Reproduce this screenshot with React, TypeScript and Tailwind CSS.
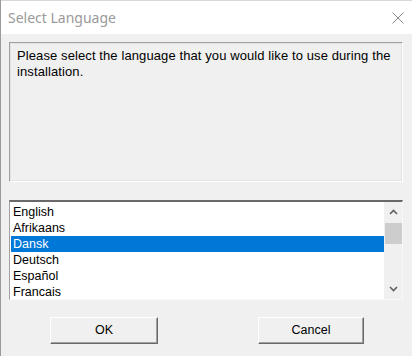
import React, { useState } from 'react';

const LANGS = ['English', 'Afrikaans', 'Dansk', 'Deutsch', 'Español', 'Francais'];

export default function App() {
  const [selected, setSelected] = useState(2);

  return (
    <div className="w-[412px] h-[356px] bg-[#f0f0f0] border-l border-[#9a9a9a] overflow-hidden flex flex-col" style={{ fontFamily: '"Liberation Sans", Arial, sans-serif' }}>
      {/* title bar */}
      <div className="h-[34px] bg-white flex items-center justify-between pl-[7px] pr-[6px] shrink-0 border-t border-[#d8d8d8]">
        <span className="text-[14px] text-[#9a9a9a]" style={{ fontFamily: '"Noto Sans", "Open Sans", sans-serif' }}>Select Language</span>
        <svg width="12" height="12" viewBox="0 0 12 12" className="mr-[2px]">
          <path d="M0.5 0.5 L11.5 11.5 M11.5 0.5 L0.5 11.5" stroke="#8a8a8a" strokeWidth="1" fill="none" />
        </svg>
      </div>

      <div className="flex-1 flex flex-col px-[8px] pt-[8px]">
        {/* message panel */}
        <div className="h-[140px] mr-[1px] border border-t-[#a0a0a0] border-l-[#a0a0a0] border-r-white border-b-white">
          <div className="h-full border border-[#e3e3e3] px-[6px] pt-[4px] text-[13px] tracking-[0.1px] leading-[16px] text-black">
            Please select the language that you would like to use during the installation.
          </div>
        </div>

        {/* list box */}
        <div className="mt-[18px] h-[100px] mr-[1px] flex border-t-2 border-l border-t-[#696969] border-l-[#a0a0a0] border-r border-b border-r-[#f8f8f8] border-b-[#f8f8f8]">
          <div className="flex-1 bg-white overflow-hidden pt-[2px] pl-[1px]">
            {LANGS.map((l, i) => (
              <div
                key={l}
                onClick={() => setSelected(i)}
                className={
                  i === selected
                    ? 'h-[16px] leading-[16px] pl-[2px] text-[12.5px] bg-[#0078d7] text-white'
                    : 'h-[16px] leading-[16px] pl-[2px] text-[12.5px] text-black'
                }
              >
                {l}
              </div>
            ))}
          </div>
          {/* scrollbar */}
          <div className="w-[18px] bg-[#f0f0f0] flex flex-col items-center">
            <div className="h-[17px] w-full flex items-center justify-center pt-[3px]">
              <svg width="9" height="6" viewBox="0 0 9 6">
                <path d="M1 5 L4.5 1.5 L8 5" stroke="#606060" strokeWidth="1.6" fill="none" />
              </svg>
            </div>
            <div className="w-[17px] h-[21px] mt-[4px] bg-[#cdcdcd]" />
            <div className="flex-1" />
            <div className="h-[17px] w-full flex items-center justify-center pb-[3px]">
              <svg width="9" height="6" viewBox="0 0 9 6">
                <path d="M1 1 L4.5 4.5 L8 1" stroke="#606060" strokeWidth="1.6" fill="none" />
              </svg>
            </div>
          </div>
        </div>

        {/* buttons */}
        <div className="flex mt-[17px]">
          <button className="ml-[41px] w-[108px] h-[27px] bg-[#f0f0f0] text-[12.5px] text-black border border-t-white border-l-white border-r-[#696969] border-b-[#696969] shadow-[inset_-1px_-1px_0_#a0a0a0]">
            OK
          </button>
          <button className="ml-[100px] w-[106px] h-[27px] bg-[#f0f0f0] text-[12.5px] text-black border border-t-white border-l-white border-r-[#696969] border-b-[#696969] shadow-[inset_-1px_-1px_0_#a0a0a0]">
            Cancel
          </button>
        </div>
      </div>
    </div>
  );
}
